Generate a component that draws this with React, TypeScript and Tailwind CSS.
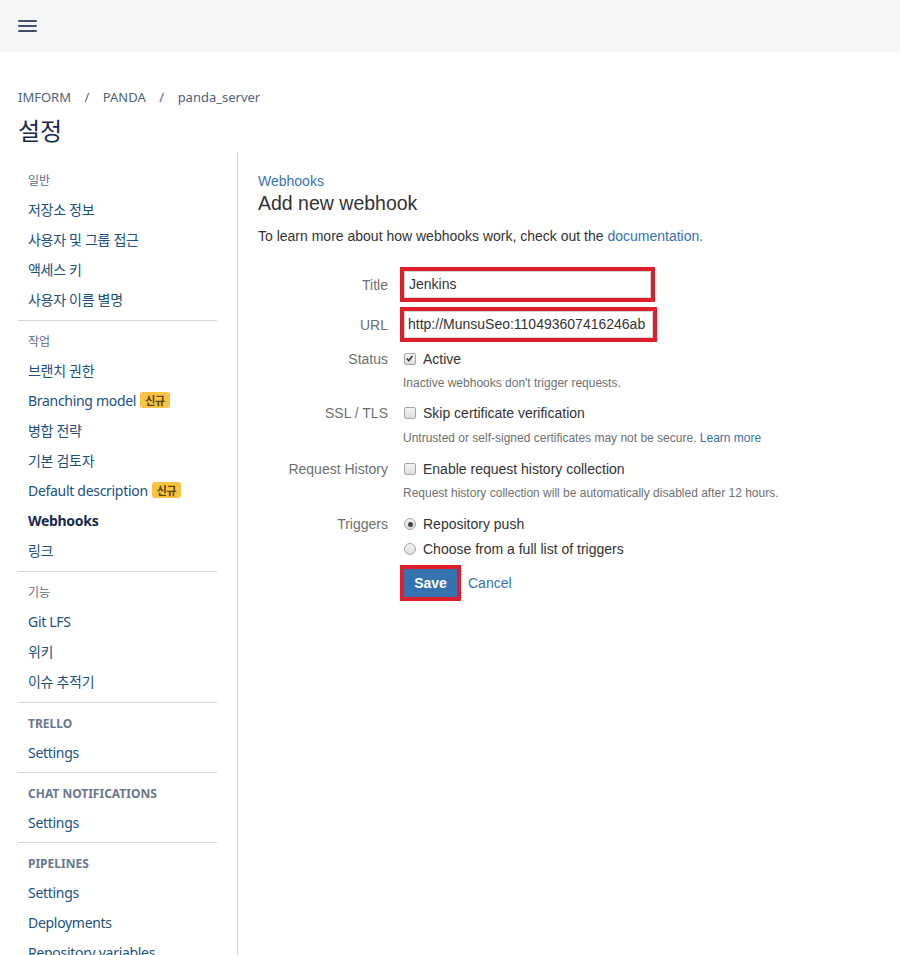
import React from "react";

const SANS = { fontFamily: '"Noto Sans", "Noto Sans CJK KR", sans-serif' };
const ARIAL = { fontFamily: '"Liberation Sans", Arial, "Noto Sans CJK KR", sans-serif' };

function Badge() {
  return (
    <span className="ml-[4px] inline-flex h-[16px] items-center rounded-[3px] bg-[#f6c342] px-[5px] text-[11px] font-bold leading-none text-[#594300]">
      신규
    </span>
  );
}

type Item = { label: string; badge?: boolean; active?: boolean };
type Section = { header: string; caps?: boolean; items: Item[] };

const sections: Section[] = [
  {
    header: "일반",
    items: [
      { label: "저장소 정보" },
      { label: "사용자 및 그룹 접근" },
      { label: "액세스 키" },
      { label: "사용자 이름 별명" },
    ],
  },
  {
    header: "작업",
    items: [
      { label: "브랜치 권한" },
      { label: "Branching model", badge: true },
      { label: "병합 전략" },
      { label: "기본 검토자" },
      { label: "Default description", badge: true },
      { label: "Webhooks", active: true },
      { label: "링크" },
    ],
  },
  {
    header: "기능",
    items: [{ label: "Git LFS" }, { label: "위키" }, { label: "이슈 추적기" }],
  },
  { header: "TRELLO", caps: true, items: [{ label: "Settings" }] },
  { header: "CHAT NOTIFICATIONS", caps: true, items: [{ label: "Settings" }] },
  {
    header: "PIPELINES",
    caps: true,
    items: [{ label: "Settings" }, { label: "Deployments" }, { label: "Repository variables" }],
  },
];

function Checkbox({ checked }: { checked?: boolean }) {
  return (
    <span className="relative ml-[3px] inline-block h-[12px] w-[12px] shrink-0 rounded-[2px] border border-[#a6a6a6] bg-gradient-to-b from-[#f4f4f4] to-[#dedede]">
      {checked && (
        <svg viewBox="0 0 12 12" className="absolute left-[0px] top-[0px] h-[10px] w-[10px]">
          <path d="M2 5.5 L4.5 8 L9 2.5" fill="none" stroke="#333" strokeWidth="1.8" />
        </svg>
      )}
    </span>
  );
}

function Radio({ checked }: { checked?: boolean }) {
  return (
    <span className="ml-[3px] inline-flex h-[12px] w-[12px] shrink-0 items-center justify-center rounded-full border border-[#a6a6a6] bg-gradient-to-b from-[#f4f4f4] to-[#dcdcdc]">
      {checked && <span className="h-[5px] w-[5px] rounded-full bg-[#444]" />}
    </span>
  );
}

function Row({ label, children, className = "" }: { label: string; children: React.ReactNode; className?: string }) {
  return (
    <div className={`flex items-center ${className}`}>
      <div className="w-[130px] shrink-0 text-right text-[14px] leading-[20px] text-[#707070]">{label}</div>
      <div className="ml-[13px] flex items-center">{children}</div>
    </div>
  );
}

function Help({ children, className = "" }: { children: React.ReactNode; className?: string }) {
  return (
    <div className={`ml-[145px] text-[12px] leading-[16px] text-[#707070] ${className}`}>{children}</div>
  );
}

export default function App() {
  return (
    <div className="min-h-[955px] w-[900px] overflow-hidden bg-white">
      <div className="flex h-[52px] items-center bg-[#f4f5f7] pl-[18px]">
        <div className="flex w-[19px] flex-col gap-[3px]">
          <span className="h-[2px] w-full rounded-[1px] bg-[#42526e]" />
          <span className="h-[2px] w-full rounded-[1px] bg-[#42526e]" />
          <span className="h-[2px] w-full rounded-[1px] bg-[#42526e]" />
        </div>
      </div>

      <div className="pl-[18px]" style={SANS}>
        <div className="mt-[36px] flex h-[20px] items-center text-[13px] text-[#505f79]">
          <span>IMFORM</span>
          <span className="mx-[13.5px]">/</span>
          <span>PANDA</span>
          <span className="mx-[13.5px]">/</span>
          <span>panda_server</span>
        </div>
        <h1 className="mt-[7px] h-[32px] text-[24px] leading-[32px] text-[#172b4d]">설정</h1>
      </div>

      <div className="mt-[5px] flex">
        <nav className="ml-[18px] w-[199px] shrink-0 pt-[16px]" style={SANS}>
          {sections.map((s, i) => (
            <div key={i} className={i > 0 ? "border-t border-[#d2d5da] pt-[8px]" : ""}>
              <div
                className={`flex h-[26px] items-center pl-[10px] text-[12px] ${
                  s.caps ? "font-bold text-[#6b778c]" : "text-[#5e6c84]"
                }`}
              >
                {s.header}
              </div>
              <div className={s.caps ? "pb-[5px]" : "pb-[6px]"}>
                {s.items.map((it, j) => (
                  <div
                    key={j}
                    className={`flex h-[30px] items-center whitespace-nowrap pl-[10px] text-[14px] tracking-[-0.3px] ${
                      it.active ? "font-bold text-[#172b4d]" : "text-[#205081]"
                    }`}
                  >
                    {it.label}
                    {it.badge && <Badge />}
                  </div>
                ))}
              </div>
            </div>
          ))}
        </nav>

        <div className="ml-[20px] min-h-[810px] border-l border-[#d2d5da] pl-[20px] pt-[19px]" style={ARIAL}>
          <div className="text-[14px] leading-[20px] text-[#3b73af]">Webhooks</div>
          <h2 className="text-[19.5px] leading-[24px] text-[#333]">Add new webhook</h2>
          <p className="mt-[11px] text-[14px] leading-[20px] text-[#333]">
            To learn more about how webhooks work, check out the{" "}
            <span className="text-[#3572b0]">documentation.</span>
          </p>

          <Row label="Title" className="mt-[21px]">
            <div className="-ml-[1px] border-[4px] border-[#dd1f2c]">
              <div className="flex h-[27px] w-[247px] items-center border border-[#d6d6d6] bg-white pl-[4px] text-[14px] text-[#333]">
                Jenkins
              </div>
            </div>
          </Row>
          <Row label="URL" className="mt-[5px]">
            <div className="-ml-[1px] border-[4px] border-[#dd1f2c]">
              <div className="flex h-[27px] w-[249px] items-center overflow-hidden whitespace-nowrap border border-[#d6d6d6] bg-white pl-[3px] text-[14px] text-[#333]">
                http://MunsuSeo:110493607416246ab
              </div>
            </div>
          </Row>

          <Row label="Status" className="mt-[7px]">
            <Checkbox checked />
            <span className="ml-[7px] text-[14px] leading-[20px] text-[#333]">Active</span>
          </Row>
          <Help className="mt-[6px]">Inactive webhooks don't trigger requests.</Help>

          <Row label="SSL / TLS" className="mt-[12px]">
            <Checkbox />
            <span className="ml-[7px] text-[14px] leading-[20px] text-[#333]">Skip certificate verification</span>
          </Row>
          <Help className="mt-[7px]">
            Untrusted or self-signed certificates may not be secure.{" "}
            <span className="text-[#3572b0]">Learn more</span>
          </Help>

          <Row label="Request History" className="mt-[13px]">
            <Checkbox />
            <span className="ml-[7px] text-[14px] leading-[20px] text-[#333]">Enable request history collection</span>
          </Row>
          <Help className="mt-[6px]">Request history collection will be automatically disabled after 12 hours.</Help>

          <Row label="Triggers" className="mt-[13px]">
            <Radio checked />
            <span className="ml-[7px] text-[14px] leading-[20px] text-[#333]">Repository push</span>
          </Row>
          <div className="ml-[143px] mt-[5px] flex items-center">
            <Radio />
            <span className="ml-[7px] text-[14px] leading-[20px] text-[#333]">Choose from a full list of triggers</span>
          </div>

          <div className="ml-[142px] mt-[6px] flex items-center">
            <div className="border-[4px] border-[#dd1f2c]">
              <div className="flex h-[28px] w-[53px] items-center justify-center bg-[#3572b0] text-[14px] font-bold text-white">
                Save
              </div>
            </div>
            <span className="ml-[7px] text-[14px] text-[#3572b0]">Cancel</span>
          </div>
        </div>
      </div>
    </div>
  );
}
